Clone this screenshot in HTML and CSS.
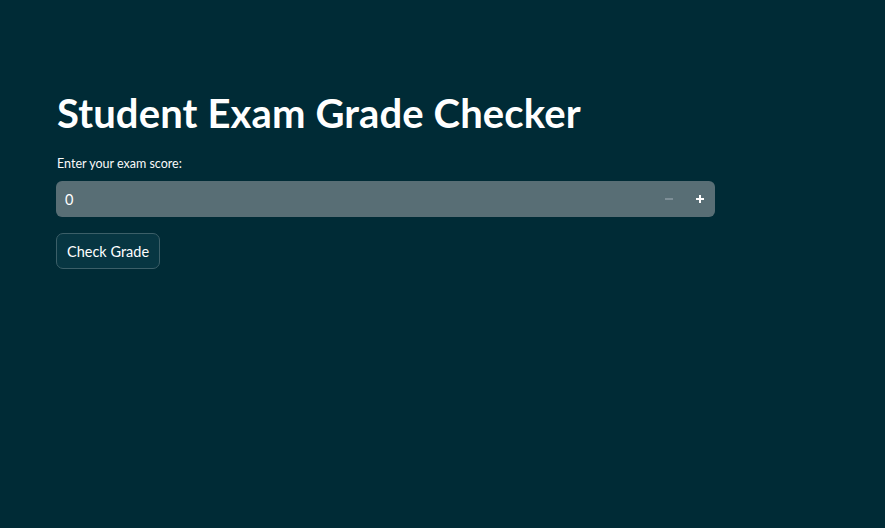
FILE: index.html
```html
<!DOCTYPE html>
<html>
<head>
<meta charset="utf-8">
<link rel="stylesheet" href="styles.css">
</head>
<body>
<main class="main">
  <h1 class="title">Student Exam Grade Checker</h1>
  <label class="label">Enter your exam score:</label>
  <div class="number">
    <span class="value">0</span>
    <div class="steps">
      <span class="step minus"><svg width="8" height="8" viewBox="0 0 8 8"><rect x="0" y="3.25" width="8" height="1.5" fill="#8a9ba3"/></svg></span>
      <span class="step plus"><svg width="8" height="8" viewBox="0 0 8 8"><rect x="0" y="3" width="8" height="2" fill="#ffffff"/><rect x="3" y="0" width="2" height="8" fill="#ffffff"/></svg></span>
    </div>
  </div>
  <button class="btn">Check Grade</button>
</main>
</body>
</html>
```
FILE: styles.css
```css
html, body {
  margin: 0;
  padding: 0;
  background: #002b36;
  height: 100%;
}
body {
  font-family: Lato, "Open Sans", sans-serif;
  color: #ffffff;
}
.main {
  width: 659px;
  padding: 90px 0 0 56px;
  display: flex;
  flex-direction: column;
  align-items: flex-start;
}
.title {
  margin: 0 0 0 1px;
  font-size: 40px;
  font-weight: 700;
  line-height: 46px;
  letter-spacing: 0.12px;
}
.label {
  margin-top: 20px;
  font-size: 12.5px;
  line-height: 16px;
  color: #fafafa;
  padding-left: 1px;
}
.number {
  margin-top: 9px;
  width: 659px;
  height: 36px;
  box-sizing: border-box;
  background: #586e75;
  border-radius: 6px;
  display: flex;
  align-items: center;
  justify-content: space-between;
  padding-left: 9px;
}
.value {
  font-size: 14.5px;
  color: #ffffff;
}
.steps {
  display: flex;
  height: 100%;
}
.step {
  width: 31px;
  display: flex;
  align-items: center;
  justify-content: center;
}
.btn {
  margin-top: 16px;
  height: 36px;
  padding: 0 10px;
  background: #073642;
  border: 1px solid #3c5f68;
  border-radius: 7px;
  color: #ffffff;
  font-family: Lato, "Open Sans", sans-serif;
  font-size: 14.5px;
}
```
